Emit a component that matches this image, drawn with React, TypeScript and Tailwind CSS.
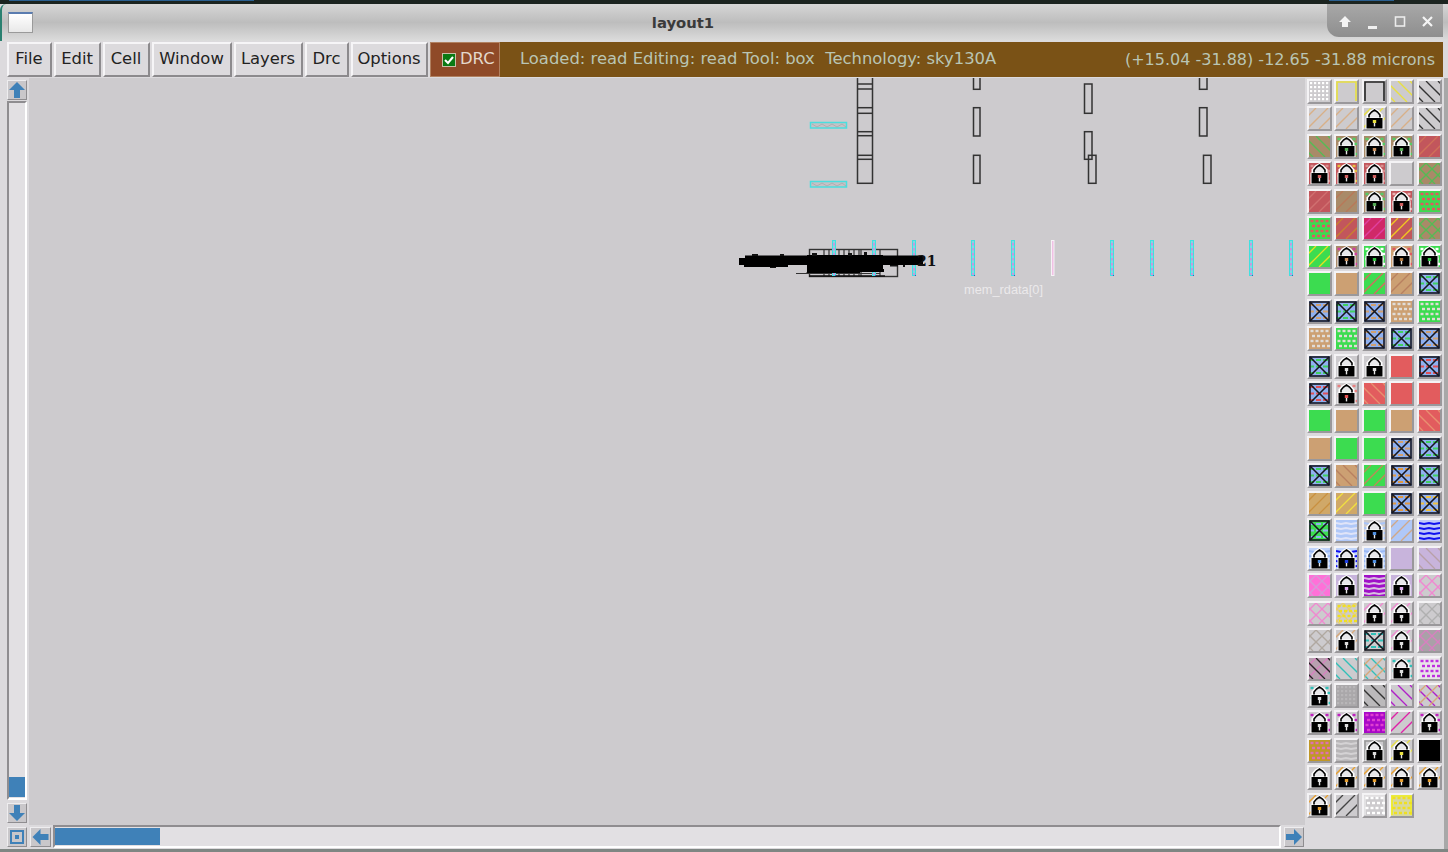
import React from "react";

const G = "#cdcbce";
const TAN = "#cca073";
const BR = "#a98a68";
const GR = "#3cdc50";
const RD = "#c2565c";
const SAL = "#e25c5e";
const LIL = "#c8b4dc";
const BL = "#8fb0f0";

const rows: string[][] = [
  [`${G} :#ffffff`, `${G} O#e8e040`, `${G} O#222222`, `${G} /#e8e040`, `${G} /#333333`],
  [`${G} \\#d8b088`, `${G} \\#d8b088`, `${G} \\#e8e040 L#e8e040`, `${G} \\#d8b088`, `${G} /#333333`],
  [`${BR} /#55bb55`, `${BR} .#55cc66 L#55aa55`, `${BR} .#55cc66 L#c89060`, `${BR} .#55cc66 L#55aa55`, `${RD} \\#d07058`],
  [`${RD} .#d89090 L#d06060`, `${RD} .#e8c040 L#d06060`, `${RD} .#d89090 L#d06060`, `${G}`, `${BR} +#55bb55`],
  [`${RD} \\#d07070`, `${BR} \\#b87858`, `${BR} .#55cc66 L#55aa55`, `${RD} .#e8b0b0 L#d06060`, `${GR} .#e05860`],
  [`${GR} .#e05860`, `${RD} \\#c88030`, `#d02868 \\#e040a0`, `${RD} \\#f0c820`, `${BR} +#55bb55`],
  [`${GR} \\#e8e020`, `${BR} .#d040a0 L#c89060`, `${GR} .#ffffff L#30c040`, `${TAN} .#e05860 L#b07840`, `${GR} .#ffffff L#30c040`],
  [`${GR}`, `${TAN}`, `${GR} \\#d86860`, `${TAN} \\#b88060`, `${BL} %#40d060 X`],
  [`${BL} %#d0a070 X`, `${BL} %#40d060 X`, `${BL} %#d0a070 X`, `${TAN} .#e0dcd8`, `${GR} .#e0dcd8`],
  [`${TAN} .#e0dcd8`, `${GR} .#e0dcd8`, `${BL} %#d0a070 X`, `${BL} %#40d060 X`, `${BL} %#d0a070 X`],
  [`${BL} %#40d060 X`, `${G} L#dddddd`, `${G} L#dddddd`, `${SAL}`, `${BL} %#e05058 X`],
  [`${BL} %#e05058 X`, `${G} .#e88080 L#e05050`, `${SAL} /#e89070`, `${SAL}`, `${SAL}`],
  [`${GR}`, `${TAN}`, `${GR}`, `${TAN}`, `${SAL} /#e89070`],
  [`${TAN}`, `${GR}`, `${GR}`, `${BL} %#d0a070 X`, `${BL} %#40d060 X`],
  [`${BL} %#40d060 X`, `${TAN} /#b88060`, `${GR} \\#c08858`, `${BL} %#e09840 X`, `${BL} %#40d060 X`],
  [`#d0a868 \\#c89040`, `#d0a868 \\#f0e040`, `${GR}`, `${BL} %#e09840 X`, `${BL} %#f0c040 X`],
  [`${GR} %#8fb0f0 X`, `#b0c8f8 ~#e0e4f8`, `${G} ~#a8c4f8 L#5090e0`, `#b0c8f8 \\#d0a888`, `#c0c8f8 ~#1010f0`],
  [`#c0d4fa ~#9ab8f4 L#5090e0`, `#c0d4fa ~#1010f0 L#2040e0`, `#c0d4fa ~#9ab8f4 L#5090e0`, `${LIL}`, `${LIL} /#b8a0a8`],
  [`#ff70d8 +#d898d8`, `${LIL} L#ddaaee`, `#a010c8 ~#d8c0e0`, `${LIL} L#ddaaee`, `${G} +#f088d0`],
  [`${G} +#f088d0`, `${G} +#e8d070 .#f0e020`, `${G} \\#f088d0 L#dddddd`, `${G} \\#f088d0 L#dddddd`, `${G} +#b0b0b0`],
  [`${G} +#b0a8a0`, `${G} \\#d8a878 L#dddddd`, `${G} %#30c0b8 X`, `${G} \\#f088d0 L#dddddd`, `#aaa0a8 +#d880c0`],
  [`#b8a0b0 +#d880c0 /#222222`, `${G} /#30c0b8`, `${G} /#30c0b8 \\#d8a878`, `${G} .#30c0b8 L#dddddd`, `#e8e4e8 .#c030e0`],
  [`${G} .#30c0b8 L#dddddd`, `#aaa8aa :#b8b6b8`, `#bbb9bb /#333333`, `${G} /#b020c8`, `${G} /#b020c8 \\#d8a878`],
  [`${G} .#c020c0 L#dddddd`, `${G} .#c020c0 L#dddddd`, `#a808c8 .#e040d0`, `${G} \\#e020a8`, `${G} .#c020c0 L#dddddd`],
  [`#c09828 .#e070b0`, `#b8b6b8 ~#d4d2d4`, `${G} O#999999 L#dddddd`, `${G} \\#e8e040 L#e8e040`, `#000000`],
  [`${G} L#dddddd`, `${G} \\#e8a030 L#e8a030`, `${G} \\#e8a030 L#e8a030`, `${G} \\#e8a030 L#e8a030`, `${G} \\#e8a030 L#e8a030`],
  [`${G} \\#e8a030 L#e8a030`, `${G} \\#444444`, `${G} O#e8e6e8 .#ffffff`, `#d8d8a0 O#f0f020 .#f0e020`],
];

function TileArt({ spec }: { spec: string }) {
  const [bg, ...ops] = spec.split(" ");
  const nums = [7, 19, 31, 43];
  const stripes = (c: string, dir: "/" | "\\", key: string) =>
    nums.map((n) =>
      dir === "\\" ? (
        <line key={key + n} x1={n} y1={0} x2={n - 21} y2={21} stroke={c} strokeWidth={1.3} />
      ) : (
        <line key={key + n} x1={n - 24} y1={0} x2={n - 3} y2={21} stroke={c} strokeWidth={1.3} />
      )
    );
  return (
    <svg viewBox="0 0 21 21" className="block h-full w-full">
      <rect width={21} height={21} fill={bg} />
      {ops.map((op, i) => {
        const k = op[0];
        const c = op.slice(1);
        if (k === "/") return <g key={i}>{stripes(c, "/", `a${i}`)}</g>;
        if (k === "\\") return <g key={i}>{stripes(c, "\\", `b${i}`)}</g>;
        if (k === "+") return <g key={i}>{stripes(c, "/", `c${i}`)}{stripes(c, "\\", `d${i}`)}</g>;
        if (k === ":")
          return (
            <g key={i} fill={c}>
              {[2, 6, 10, 14, 18].flatMap((y) =>
                [2, 6, 10, 14, 18].map((x) => <rect key={`${x}-${y}`} x={x - 1} y={y - 1} width={2.2} height={2.2} />)
              )}
            </g>
          );
        if (k === ".")
          return (
            <g key={i} fill={c}>
              {[3, 8, 13, 18].flatMap((y, r) =>
                [3, 8, 13, 18].map((x) => (
                  <rect key={`${x}-${y}`} x={x - 1.5 + (r % 2 ? 1.5 : 0)} y={y - 1.2} width={3} height={2.4} />
                ))
              )}
            </g>
          );
        if (k === "~")
          return (
            <g key={i} stroke={c} strokeWidth={1.8} fill="none">
              {[3, 8, 13, 18].map((y) => (
                <path key={y} d={`M0 ${y} L5 ${y + 1} L10 ${y} L15 ${y + 1} L21 ${y}`} />
              ))}
            </g>
          );
        if (k === "%")
          return (
            <g key={i} stroke={c} strokeWidth={1.8} fill="none" strokeDasharray="5 2">
              {[4, 10.5, 17].map((y) => (
                <line key={y} x1={0} x2={21} y1={y} y2={y} />
              ))}
            </g>
          );
        if (k === "O")
          return <path key={i} d="M1 20 V1 H20 V20" fill="none" stroke={c} strokeWidth={1.6} />;
        if (k === "X")
          return (
            <g key={i} fill="none" stroke="#16161e" strokeWidth={1.6}>
              <rect x={1} y={1} width={19} height={19} />
              <path d="M1 1 L20 20 M20 1 L1 20" />
            </g>
          );
        if (k === "L")
          return (
            <g key={i}>
              <path d="M2.5 10 V6.5 L6 2.5 L10.5 0 L15 2.5 L18.5 6.5 V10 Z" fill="#ffffff" />
              <path d="M5 11 V7 L7.5 4 L10.5 2 L13.5 4 L16 7 V11" fill="#e8e8ea" stroke="#000" strokeWidth={1.6} />
              <rect x={1.5} y={9.5} width={18} height={11.5} fill="#ffffff" />
              <rect x={2.5} y={10} width={16} height={10.5} fill="#000" />
              <rect x={8.8} y={12} width={3.4} height={3} fill={c} />
              <rect x={9.8} y={15} width={1.4} height={3.4} fill="#e8e8e8" />
            </g>
          );
        return null;
      })}
    </svg>
  );
}

function Tile({ spec }: { spec: string }) {
  return (
    <div className="h-[25px] w-[25px] border-2 border-t-[#f4f3f5] border-l-[#f4f3f5] border-r-[#9a989b] border-b-[#9a989b]">
      <TileArt spec={spec} />
    </div>
  );
}

type Dir = "up" | "down" | "left" | "right";
function ArrowBtn({ dir, className }: { dir: Dir; className: string }) {
  const rot = { up: 0, right: 90, down: 180, left: 270 }[dir];
  return (
    <div className={`shrink-0 border border-t-[#eeedef] border-l-[#eeedef] border-r-[#8f8d90] border-b-[#8f8d90] bg-[#c9c7ca] ${className}`}>
      <svg viewBox="0 0 18 18" className="block h-full w-full">
        <path d="M9 1 L17 9 H12 V17 H6 V9 H1 Z" fill="#3f81b8" transform={`rotate(${rot} 9 9)`} />
      </svg>
    </div>
  );
}

function Menu({ label, w }: { label: string; w: string }) {
  return (
    <div className={`flex h-[35px] items-center justify-center border-2 border-t-[#f6f5f7] border-l-[#f6f5f7] border-r-[#8c8a8d] border-b-[#8c8a8d] bg-[#dcdadd] pr-[1px] text-[#222] ${w}`}>
      {label}
    </div>
  );
}

const bars = [1110, 1150, 1190, 1249, 1289, 971, 1011, 912, 872, 832];

function CanvasArt() {
  const s = { fill: "none", stroke: "#333", strokeWidth: 1.5 };
  return (
    <svg viewBox="29 78 1276 747" className="block h-full w-full">
      {[122.5, 181.5].map((y) => (
        <g key={y}>
          <rect x={810.5} y={y} width={36} height={5.5} fill="#c4c2c6" stroke="#4adede" strokeWidth={1.5} />
          <path d={`M812 ${y + 1.5} l5 3 l5 -3 l5 3 l5 -3 l5 3 l5 -3 l4 3`} fill="none" stroke="#aaa8ac" strokeWidth={0.8} />
        </g>
      ))}
      <rect x={857.5} y={70} width={15} height={113.3} {...s} />
      {[84, 89, 107.7, 113.3, 131.7, 135.7, 155.3, 159.3].map((y) => (
        <line key={y} x1={857.5} x2={872.5} y1={y} y2={y} {...s} />
      ))}
      <rect x={973.5} y={70} width={6.5} height={19.3} {...s} />
      <rect x={973.5} y={107.7} width={6.5} height={28.3} {...s} />
      <rect x={973.5} y={155.3} width={6.5} height={28} {...s} />
      <rect x={1084.5} y={84} width={7.5} height={29.3} {...s} />
      <rect x={1084.5} y={131.7} width={7.5} height={27.6} {...s} />
      <rect x={1088.5} y={155.3} width={7.5} height={28} {...s} />
      <rect x={1199.5} y={70} width={7.5} height={19.3} {...s} />
      <rect x={1199.5} y={107.7} width={7.5} height={28.3} {...s} />
      <rect x={1203.5} y={155.3} width={7.5} height={28} {...s} />

      <rect x={809.5} y={249.5} width={88} height={27} fill="none" stroke="#333" strokeWidth={1.4} />
      {[824, 829, 834, 839, 844, 849, 854, 859, 861, 880].map((x) => (
        <line key={x} x1={x} x2={x} y1={250} y2={276} stroke="#333" strokeWidth={1.2} />
      ))}
      <line x1={796} x2={880} y1={273.5} y2={273.5} stroke="#333" strokeWidth={1.2} />
      <line x1={809} x2={885} y1={276} y2={276} stroke="#111" strokeWidth={1.6} />

      {bars.map((x) => (
        <g key={x}>
          <rect x={x + 0.5} y={240.5} width={3} height={35} fill="#84d8e2" stroke="#40e0e0" strokeWidth={1} />
          <line x1={x + 2} x2={x + 2} y1={243} y2={275} stroke="#c898e0" strokeWidth={2} strokeDasharray="2.5 2.5" />
          <rect x={x + 3} y={275} width={1} height={1} fill="#3a50c8" />
        </g>
      ))}
      <rect x={1051.5} y={240.5} width={2.5} height={35} fill="#f0c0e4" stroke="#f6f2f6" strokeWidth={1} />

      <path d="M745 255.5 H923 V265 H880 L878 269 H884 V272 H860 V273 H806 L811 269 V265 H788 V267 H744 V265 H739 V258 H745 Z" fill="#000" />
      <rect x={807} y={255} width={76} height={17} fill="#000" />
      <path d="M752 254 h6 v2 h-6 Z M770 267 h6 v1 h-6 Z M780 254 h4 v2 h-4 Z M812 253 h5 v3 h-5 Z M848 253 h4 v3 h-4 Z M864 252 h3 v3 h-3 Z M890 265 h8 v1.5 h-8 Z M903 265 h2 v2 h-2 Z" fill="#111" />
      <text x={917} y={266} fontFamily="'DejaVu Serif', serif" fontWeight={700} fontSize={14} fill="#111">
        21
      </text>
      <text x={964} y={294} fontFamily="'Liberation Sans', sans-serif" fontSize={12.8} fill="#ebe9eb">
        mem_rdata[0]
      </text>
    </svg>
  );
}

export default function App() {
  return (
    <div className="flex h-[852px] w-[1448px] flex-col overflow-hidden bg-[#dcdadd] font-['DejaVu_Sans',sans-serif] text-[16.4px]">
      <div className="relative h-[4px] shrink-0 bg-[#1b2420]">
        <div className="absolute left-[9px] top-0 h-px w-[245px] bg-[#2a5f90]" />
        <div className="absolute left-[1329px] top-0 h-px w-[65px] bg-[#2a5f90]" />
      </div>

      <div className="relative flex h-[37px] shrink-0 items-center justify-center rounded-tl-[6px] border-l-2 border-[#2a8070] bg-gradient-to-b from-[#d6d6d6] via-[#bdbdbd] to-[#dcdcdc] pr-[84px] pt-[1px]">
        <div className="absolute left-[6px] top-[8px] h-[21px] w-[25px] border border-[#9a9a9a] border-t-2 border-t-[#5a7cb0] bg-gradient-to-b from-white to-[#e8e8e8]" />
        <span className="text-[14.8px] font-bold text-[#3a3a3a]">layout1</span>
        <div className="absolute right-[5px] top-0 flex h-[33px] w-[116px] items-center rounded-bl-[12px] bg-gradient-to-b from-[#a8a8a8] to-[#8e8e8e]">
          <svg viewBox="0 0 116 33" className="block h-[33px] w-[116px]">
            <path d="M18 12 L24 18 H21 V23 H15 V18 H12 Z" fill="#f4f4f4" />
            <rect x={41} y={22} width={9} height={3} fill="#f0f0f0" />
            <rect x={68.5} y={13} width={9} height={9} fill="none" stroke="#ececec" strokeWidth={1.6} />
            <path d="M96 13 L105 22 M105 13 L96 22" stroke="#f4f4f4" strokeWidth={2.2} />
          </svg>
        </div>
      </div>

      <div className="flex h-[37px] shrink-0 items-start pl-[7px] pr-[5px] pt-[1px]">
        <div className="flex gap-[2px]">
          <Menu label="File" w="w-[45px]" />
          <Menu label="Edit" w="w-[47px]" />
          <Menu label="Cell" w="w-[47px]" />
          <Menu label="Window" w="w-[80px]" />
          <Menu label="Layers" w="w-[69px]" />
          <Menu label="Drc" w="w-[44px]" />
          <Menu label="Options" w="w-[77px]" />
        </div>
        <div className="ml-[2px] flex h-[35px] w-[70px] shrink-0 items-center border border-[#b08060] bg-[#8f4a28] pl-[11px] text-[#e4d8cc]">
          <div className="mr-[4px] flex h-[14px] w-[14px] items-center justify-center border border-[#c8c0a8] bg-[#0a7a14]">
            <svg viewBox="0 0 12 12" className="h-[12px] w-[12px]">
              <path d="M2 6 L5 9 L10 3" fill="none" stroke="#fff" strokeWidth={2} />
            </svg>
          </div>
          DRC
        </div>
        <div className="flex h-[35px] flex-1 items-center justify-between bg-[#7a5216] pl-[20px] pr-[8px] text-[#b9c5b4]">
          <span className="whitespace-pre">Loaded: read Editing: read Tool: box  Technology: sky130A</span>
          <span className="whitespace-pre text-[16px]">(+15.04 -31.88) -12.65 -31.88 microns</span>
        </div>
      </div>

      <div className="flex min-h-0 flex-1 border-r-4 border-[#a8a8a8]">
        <div className="flex w-[1305px] shrink-0 flex-col">
          <div className="flex min-h-0 flex-1">
            <div className="flex w-[29px] shrink-0 flex-col pl-[7px] pt-[2px]">
              <ArrowBtn dir="up" className="h-[20px] w-[20px]" />
              <div className="mt-[1px] flex h-[699px] w-[20px] flex-col justify-end border-2 border-t-[#8f8d90] border-l-[#8f8d90] border-r-white border-b-white bg-[#e2e0e3] pb-[1px]">
                <div className="h-[20px] bg-[#3f81b8]" />
              </div>
              <ArrowBtn dir="down" className="mt-[3px] h-[20px] w-[20px]" />
            </div>
            <div className="min-w-0 flex-1 bg-[#cdcbce]">
              <CanvasArt />
            </div>
          </div>
          <div className="flex h-[24px] shrink-0 items-start pl-[7px]">
            <div className="mt-[2px] flex h-[20px] w-[20px] items-center justify-center border border-t-[#eeedef] border-l-[#eeedef] border-r-[#8f8d90] border-b-[#8f8d90] bg-[#c9c7ca]">
              <div className="flex h-[14px] w-[14px] items-center justify-center border-2 border-[#3f81b8] bg-[#c9c7ca]">
                <div className="h-[4px] w-[4px] bg-[#3f81b8]" />
              </div>
            </div>
            <ArrowBtn dir="left" className="ml-[3px] mt-[2px] h-[20px] w-[21px]" />
            <div className="ml-[2px] flex h-[23px] w-[1228px] items-stretch border-2 border-t-[#8f8d90] border-l-[#8f8d90] border-r-white border-b-white bg-[#e2e0e3] py-px">
              <div className="w-[105px] bg-[#3f81b8]" />
            </div>
            <ArrowBtn dir="right" className="ml-[3px] mt-[2px] h-[20px] w-[20px]" />
          </div>
        </div>
        <div className="grid flex-1 auto-rows-[27.46px] grid-cols-[repeat(5,27.4px)] content-start pl-[2px] pt-[1px]">
          {rows.flat().map((spec, i) => (
            <Tile key={i} spec={spec} />
          ))}
        </div>
      </div>
      <div className="h-[3px] shrink-0 bg-[#7f8683]" />
    </div>
  );
}
